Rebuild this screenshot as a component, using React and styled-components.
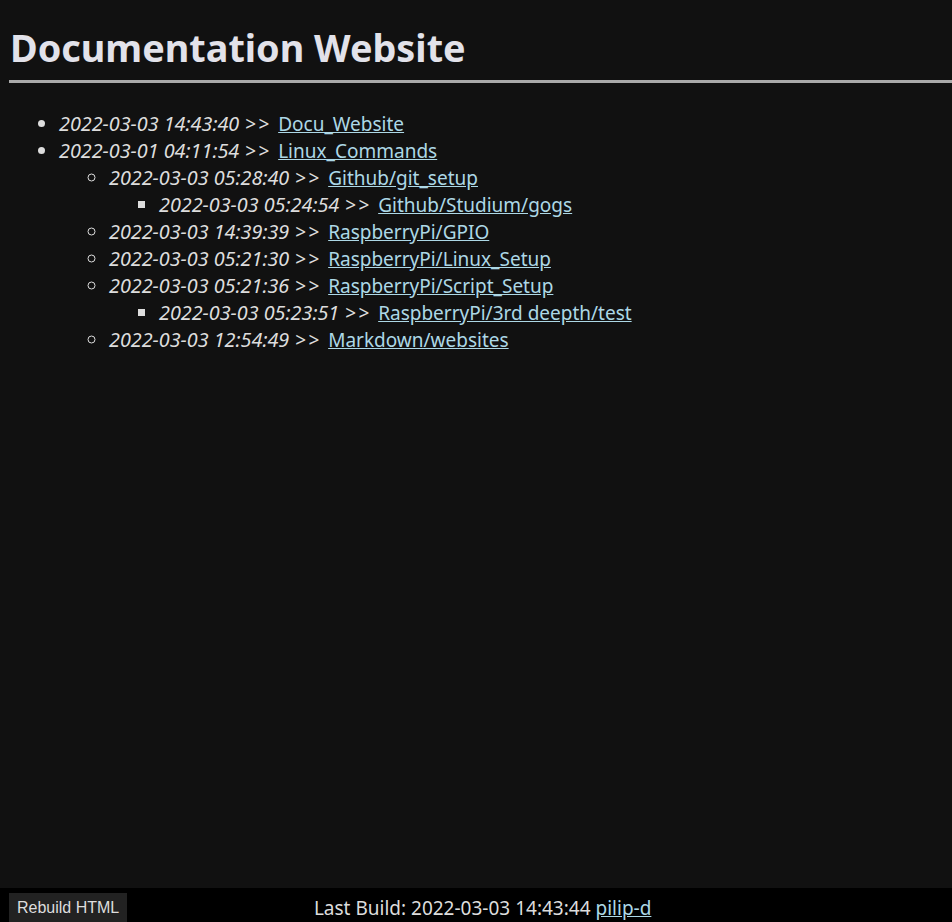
import React from 'react';
import styled, { createGlobalStyle } from 'styled-components';

const GlobalStyle = createGlobalStyle`
  html, body {
    margin: 0;
    padding: 0;
    background: #111;
  }
  #root {
    min-height: 100vh;
  }
`;

const StyledPage = styled.div`
  display: flex;
  flex-direction: column;
  min-height: 100vh;
  background: #111;
  color: #ddd;
  font-family: 'Noto Sans', 'Open Sans', sans-serif;
`;

const StyledMain = styled.main`
  flex: 1;
  padding: 0 0 0 9px;
`;

const StyledTitle = styled.h1`
  margin: 0;
  padding: 28px 0 12px 1px;
  font-size: 37.8px;
  font-weight: bold;
  line-height: 40px;
  color: #e2e2ea;
  border-bottom: 3px solid #aaa;
`;

const StyledList = styled.ul`
  margin: ${({ $nested }) => ($nested ? '0' : '27px 0 0')};
  padding-left: 50px;
  list-style-type: ${({ $level }) => ['disc', 'circle', 'square'][$level] || 'disc'};
  font-size: 19.8px;
  line-height: 27px;
`;

const StyledItem = styled.li`
  em {
    font-style: italic;
  }

  .sep {
    font-size: 19px;
    line-height: 1;
    letter-spacing: 2.5px;
    padding: 0 1px 0 6px;
  }

  a {
    font-size: 19px;
    line-height: 1;
    color: #add8e6;
    text-decoration: underline;
  }
`;

const StyledFooter = styled.footer`
  display: flex;
  align-items: flex-end;
  height: 34px;
  padding: 0 0 0 9px;
  background: #000;
  color: #ddd;
  font-size: 19px;
`;

const StyledButton = styled.button`
  height: 29px;
  padding: 0 8px;
  border: none;
  background: #222;
  color: #ddd;
  font-family: 'Liberation Sans', Arial, sans-serif;
  font-size: 16px;
`;

const StyledBuild = styled.div`
  flex: 1;
  text-align: center;
  line-height: 28px;
  padding-right: 114px;

  a {
    color: #add8e6;
  }
`;

const entries = [
  { time: '2022-03-03 14:43:40', name: 'Docu_Website' },
  {
    time: '2022-03-01 04:11:54',
    name: 'Linux_Commands',
    children: [
      {
        time: '2022-03-03 05:28:40',
        name: 'Github/git_setup',
        children: [{ time: '2022-03-03 05:24:54', name: 'Github/Studium/gogs' }],
      },
      { time: '2022-03-03 14:39:39', name: 'RaspberryPi/GPIO' },
      { time: '2022-03-03 05:21:30', name: 'RaspberryPi/Linux_Setup' },
      {
        time: '2022-03-03 05:21:36',
        name: 'RaspberryPi/Script_Setup',
        children: [{ time: '2022-03-03 05:23:51', name: 'RaspberryPi/3rd deepth/test' }],
      },
      { time: '2022-03-03 12:54:49', name: 'Markdown/websites' },
    ],
  },
];

const EntryList = ({ items, level = 0 }) => (
  <StyledList $level={level} $nested={level > 0}>
    {items.map((item) => (
      <StyledItem key={item.name}>
        <em>{item.time}</em>
        <span className="sep">{'>>'}</span>{' '}
        <a href="#">{item.name}</a>
        {item.children && <EntryList items={item.children} level={level + 1} />}
      </StyledItem>
    ))}
  </StyledList>
);

const App = () => (
  <>
    <GlobalStyle />
    <StyledPage>
      <StyledMain>
        <StyledTitle>Documentation Website</StyledTitle>
        <EntryList items={entries} />
      </StyledMain>
      <StyledFooter>
        <StyledButton type="button">Rebuild HTML</StyledButton>
        <StyledBuild>
          Last Build: 2022-03-03 14:43:44 <a href="#">pilip-d</a>
        </StyledBuild>
      </StyledFooter>
    </StyledPage>
  </>
);

export default App;
